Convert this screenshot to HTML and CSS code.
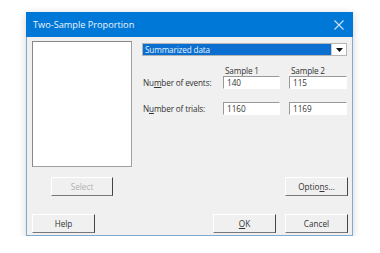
FILE: index.html
```html
<!DOCTYPE html>
<html>
<head>
  <meta charset="UTF-8">
  <title>Two-Sample Proportion</title>
  <link rel="stylesheet" href="styles.css">
</head>
<body>
  <div class="dialog">
    <div class="titlebar">
      <span class="title">Two-Sample Proportion</span>
      <span class="close">
        <svg width="10" height="10" viewBox="0 0 10 10"><path d="M0.5 0.5L9.5 9.5M9.5 0.5L0.5 9.5" stroke="#cfe3f7" stroke-width="1.1" fill="none"/></svg>
      </span>
    </div>
    <div class="content">
      <div class="top">
        <div class="listbox"></div>
        <div class="panel">
          <div class="combo">
            <span class="combo-text">Summarized data</span>
            <span class="combo-arrow">
              <svg width="7" height="4" viewBox="0 0 7 4"><path d="M0 0H7L3.5 4Z" fill="#111"/></svg>
            </span>
          </div>
          <div class="grid">
            <span></span>
            <span class="head">Sample 1</span>
            <span class="head">Sample 2</span>
            <label class="lbl">Nu<u>m</u>ber of events:</label>
            <input class="field" type="text" value="140">
            <input class="field" type="text" value="115">
            <label class="lbl lbl-2">N<u>u</u>mber of trials:</label>
            <input class="field field-2" type="text" value="1160">
            <input class="field field-2" type="text" value="1169">
          </div>
        </div>
      </div>
      <div class="row row-mid">
        <button class="btn btn-select" disabled>Select</button>
        <button class="btn">Optio<u>n</u>s...</button>
      </div>
      <div class="row row-bottom">
        <button class="btn">Help</button>
        <div class="right-btns">
          <button class="btn"><u>O</u>K</button>
          <button class="btn">Cancel</button>
        </div>
      </div>
    </div>
  </div>
</body>
</html>
```

FILE: styles.css
```css
/* page */
body {
  margin: 0;
  padding: 12px 0 0 26px;
  background-color: #fff;
  font-family: "Open Sans", "Noto Sans", sans-serif;
  font-size: 8.2px;
  letter-spacing: -0.15px;
  color: #333;
}

/* window */
.dialog {
  box-sizing: border-box;
  width: 327px;
  height: 224px;
  background-color: #f0f0f0;
  border: 1px solid #7fa9d4;
  box-shadow: 0 2px 8px rgba(0, 0, 0, 0.18);
}

.titlebar {
  height: 25px;
  margin: -1px -1px 0 -1px;
  background-color: #0078d7;
  display: flex;
  align-items: center;
  justify-content: space-between;
  padding: 0 9px 0 7px;
}

.title {
  color: #eef5fc;
  font-size: 9.2px;
  letter-spacing: 0;
}

.close {
  display: flex;
}

.content {
  padding: 4px 4px 0 5px;
}

.top {
  display: flex;
}

.listbox {
  box-sizing: border-box;
  width: 100px;
  height: 126px;
  background-color: #fff;
  border: 1px solid #a0a0a0;
  border-top-color: #888;
  border-left-color: #888;
}

.panel {
  margin-left: 10px;
  width: 205px;
}

/* dropdown */
.combo {
  box-sizing: border-box;
  margin-top: 2px;
  height: 13px;
  display: flex;
  border: 1px solid #b5b5b5;
  background-color: #fff;
}

.combo-text {
  flex: 1;
  background-color: #0a6fd0;
  color: #e8f1fb;
  line-height: 11px;
  padding-left: 2px;
}

.combo-arrow {
  width: 14px;
  display: flex;
  align-items: center;
  justify-content: center;
  border-left: 1px solid #ccc;
}

/* sample inputs */
.grid {
  display: grid;
  grid-template-columns: 72px 57px 58px;
  column-gap: 9px;
  margin-top: 9px;
  align-items: center;
}

.head {
  padding-left: 2px;
  line-height: 11px;
}

.lbl {
  padding-left: 1px;
  white-space: nowrap;
}

.field {
  box-sizing: border-box;
  width: 100%;
  height: 13px;
  margin: 0;
  padding: 0 0 0 3px;
  font: inherit;
  color: #333;
  background-color: #fff;
  border: 1px solid #fff;
  border-top-color: #999;
  border-left-color: #999;
  outline: none;
}

.field-2,
.lbl-2 {
  margin-top: 13px;
}

/* buttons */
.row {
  display: flex;
  justify-content: space-between;
}

.row-mid {
  margin-top: 10px;
  padding: 0 0 0 19px;
}

.row-bottom {
  margin-top: 18px;
}

.right-btns {
  display: flex;
  gap: 9px;
}

.btn {
  box-sizing: border-box;
  width: 63px;
  height: 19px;
  margin: 0;
  padding: 0;
  font: inherit;
  color: #333;
  background-color: #f0f0f0;
  border: 1px solid #fff;
  border-right-color: #444;
  border-bottom-color: #777;
  cursor: pointer;
}

.btn-select {
  width: 62px;
  color: #b0b0b0;
}
```
